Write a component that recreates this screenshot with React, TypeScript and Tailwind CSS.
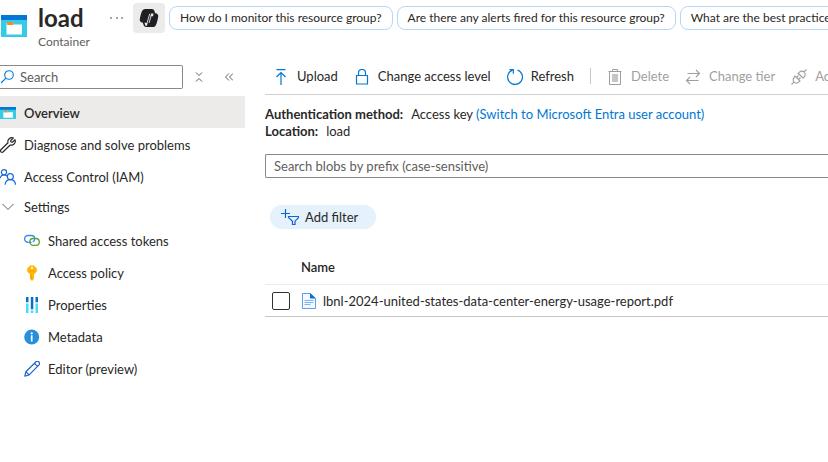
import type { ReactNode } from "react";

type IconProps = { className?: string };

function ContainerIcon({ className }: IconProps) {
  return (
    <svg className={className} viewBox="0 0 26 22" preserveAspectRatio="none" aria-hidden="true">
      <rect width="26" height="22" fill="#35cbe8" />
      <rect width="26" height="5" fill="#0078d4" />
      <path d="M5.500 8h7v1.500h8.500v10H5.500z" fill="#fff" />
      <rect x="6" y="7" width="6.500" height="3" rx=".8" fill="#f78d1e" />
    </svg>
  );
}

function CopilotIcon() {
  return (
    <svg className="size-5" viewBox="0 0 20 20" aria-hidden="true">
      <path d="M6.500 1h6.300c1.500 0 2.200.8 2.600 2l.8 2.300c2 0 3.400 1.400 3 3.600-.4 2.300-1 4.600-1.800 7-.6 2-1.700 3.100-3.600 3.100H7.300c-1.500 0-2.300-.8-2.700-2l-.8-2.300c-2 0-3.300-1.400-3-3.600.4-2.400 1-4.700 1.800-7C3.300 2 4.600 1 6.500 1z" fill="#1f2023" />
      <path d="M12 5.500h2.500l-.4 2.700h-2.600zM5.500 14.700h3.200l-.7 2.600c-.3.900-1.200.8-1.600.1z" fill="#ebebec" />
      <path d="M10.700 5.800 8.200 14.700M12.200 7.500 10 15" fill="none" stroke="#ebebec" strokeWidth=".9" />
    </svg>
  );
}

function SearchIcon() {
  return (
    <svg className="size-3.5 shrink-0" viewBox="0 0 14 14" fill="none" stroke="#0078d4" strokeWidth="1.100" aria-hidden="true">
      <circle cx="9" cy="5" r="4.300" />
      <path d="M5.900 8.100 1 13" />
    </svg>
  );
}

function WrenchIcon() {
  return (
    <svg className="size-4 shrink-0" viewBox="0 0 16 16" fill="none" stroke="#292827" strokeWidth="1.200" strokeLinejoin="round" aria-hidden="true">
      <path d="M13.300 1A4 4 0 0 0 8 5.800L.9 12.700a1.500 1.500 0 0 0 0 2.100 1.600 1.600 0 0 0 2.300 0L10.200 8A4 4 0 0 0 15 2.700l-2.600 2.500-1.500-.2-.2-1.500z" />
    </svg>
  );
}

function PeopleIcon() {
  return (
    <svg className="size-4 shrink-0" viewBox="0 0 16 16" fill="none" stroke="#1468d9" strokeWidth="1.200" aria-hidden="true">
      <circle cx="4" cy="3.200" r="2.600" />
      <circle cx="10.300" cy="7.700" r="3" />
      <path d="M.2 9.200C.6 7.200 2 5.900 4 5.900c1.200 0 2.200.5 3 1.300M5.100 15.800c.2-3.100 2.300-5.100 5.200-5.100s5 2 5.200 5.100" />
    </svg>
  );
}

function LinkIcon() {
  return (
    <svg className="size-4 shrink-0" viewBox="0 0 16 16" fill="none" strokeWidth="1.300" aria-hidden="true">
      <rect x="5.800" y="5.500" width="9.500" height="6.800" rx="3.400" stroke="#5ea42c" />
      <path d="M7.500 9.300H4a3.400 3.400 0 0 1 0-6.800h3.300a3.400 3.400 0 0 1 3.400 3.400c0 1.400-.8 2.500-1.900 3.100" stroke="#338fe5" />
    </svg>
  );
}

function KeyIcon() {
  return (
    <svg className="size-4 shrink-0" viewBox="0 0 16 16" aria-hidden="true">
      <path d="M6 .4h4l2.800 2.800v3.400L10 9.400V14l-2 2-2-2V9.400L3.200 6.600V3.200z" fill="#ffb900" />
      <circle cx="8" cy="3" r="1.200" fill="#fff0bd" />
      <path d="M5.300 6h5.400M7.300 9.500v4.500" stroke="#f5980a" strokeWidth=".9" />
    </svg>
  );
}

function BarsIcon() {
  return (
    <svg className="size-4 shrink-0" viewBox="0 0 16 16" aria-hidden="true">
      <path d="M2 7h2.500v9H2zM6.800 13h2.500v3H6.800zM11.500 7H14v9h-2.500z" fill="#50d8f5" />
      <path d="M2 0h2.500v5H2zM6.800 0h2.500v12H6.800zM11.500 0H14v5h-2.500z" fill="#0e6dbd" />
      <path d="M2 5h2.500v2H2zM6.800 12h2.500v2H6.800zM11.500 5H14v2h-2.500z" fill="#a5e6f7" />
    </svg>
  );
}

function InfoIcon() {
  return (
    <svg className="size-4 shrink-0" viewBox="0 0 16 16" aria-hidden="true">
      <circle cx="7.700" cy="8" r="7.500" fill="#288fdc" />
      <circle cx="7.700" cy="4.300" r="1.100" fill="#fff" />
      <path d="M7.700 6.300V12.500" stroke="#fff" strokeWidth="1.700" />
    </svg>
  );
}

function PencilIcon() {
  return (
    <svg className="size-4 shrink-0" viewBox="0 0 16 16" fill="none" stroke="#1f60ca" strokeWidth="1.200" strokeLinejoin="round" aria-hidden="true">
      <path d="m.8 15.200 1.100-4.500L11.800 1a1.900 1.900 0 0 1 3 0 2 2 0 0 1 0 3.100l-9.700 9.800zM10.500 2.300l3 3M1.900 10.700l3.200 3.200" />
    </svg>
  );
}

function UploadIcon() {
  return (
    <svg className="size-4" viewBox="0 0 16 16" fill="none" stroke="#0078d4" strokeWidth="1.200" aria-hidden="true">
      <path d="M3.500.6h9M8 16V3.500M3.500 8 8 3.500 12.500 8" />
    </svg>
  );
}

function LockIcon() {
  return (
    <svg className="size-4" viewBox="0 0 16 16" fill="none" stroke="#0078d4" strokeWidth="1.200" aria-hidden="true">
      <path d="M2.500 6.500h11v8.500h-11zM4.500 6.500V4a3.500 3.500 0 0 1 7 0v2.500" />
    </svg>
  );
}

function RefreshIcon() {
  return (
    <svg className="size-4" viewBox="0 0 16 16" fill="none" stroke="#0078d4" strokeWidth="1.200" aria-hidden="true">
      <path d="M10.500 1A7.400 7.400 0 1 1 5.300 1.100M2.500.7h3.800v4" />
    </svg>
  );
}

function TrashIcon() {
  return (
    <svg className="size-4" viewBox="0 0 16 16" fill="none" stroke="#a19f9d" aria-hidden="true">
      <path d="M5 5h6v8H5z" fill="#c8c6c4" stroke="none" />
      <path d="M1.500 2.500h13M5.500 2.500v-2h5v2M2.500 2.500v13h11v-13" />
    </svg>
  );
}

function SwapIcon() {
  return (
    <svg className="size-4" viewBox="0 0 16 16" fill="none" stroke="#a19f9d" strokeWidth="1.100" aria-hidden="true">
      <path d="M2.500 4.500h12M11 1l3.500 3.500L11 8M13.500 11.500h-12M5 8l-3.500 3.500L5 15" />
    </svg>
  );
}

function PlugIcon() {
  return (
    <svg className="size-4" viewBox="0 0 16 16" fill="none" stroke="#a19f9d" strokeWidth="1.100" aria-hidden="true">
      <path d="m.5 15.500 2.600-2.600M12.900 3.100 15.500.5M7 4l5 5 1.200-1.200a3.300 3.300 0 0 0 0-4.700 3.300 3.300 0 0 0-4.700 0L6.500 5.100M4 7l5 5-1.200 1.200a3.300 3.300 0 0 1-4.700 0 3.300 3.300 0 0 1 0-4.700zM5.500 8.500l2-2M7.500 10.500l2-2" />
    </svg>
  );
}

function FilterIcon() {
  return (
    <svg className="h-4 w-[18px]" viewBox="0 0 18 16" fill="none" stroke="#0f62d1" strokeWidth="1.200" aria-hidden="true">
      <path d="M4.500 0v9M0 4.500h9M7.500 7.500h10v1.200l-3.500 3.500v3.300h-2.500v-3.300L7.700 8.700z" />
    </svg>
  );
}

function FileIcon() {
  return (
    <svg className="h-4 w-3.5" viewBox="0 0 14 16" aria-hidden="true">
      <path d="M.5.5h8l5 5v10H.5z" fill="#f3f9ff" stroke="#5ea0ef" />
      <path d="M8 0v5.500h6z" fill="#0078d4" />
      <path d="M2.500 7.500h9M2.500 9.500h9M2.500 11.500h6" stroke="#7db4f3" />
    </svg>
  );
}

function NavItem({ icon, label, nested, active }: { icon: ReactNode; label: string; nested?: boolean; active?: boolean }) {
  return (
    <li>
      <a
        href="#"
        aria-current={active ? "page" : undefined}
        className={`flex h-8 items-center gap-2 pt-0.5 ${nested ? "pl-6" : ""} ${active ? "bg-[#edebe9] font-semibold" : ""}`}
      >
        {icon}
        <span>{label}</span>
      </a>
    </li>
  );
}

function Command({ icon, label, disabled }: { icon: ReactNode; label: string; disabled?: boolean }) {
  return (
    <button type="button" disabled={disabled} className="flex shrink-0 items-center gap-2 whitespace-nowrap disabled:text-[#a19f9d]">
      {icon}
      {label}
    </button>
  );
}

const prompts = [
  "How do I monitor this resource group?",
  "Are there any alerts fired for this resource group?",
  "What are the best practices for this resource group?",
];

export default function App() {
  return (
    <div className="min-h-screen overflow-hidden bg-white font-[Lato,'Open_Sans',sans-serif] text-[13px] leading-[17px] text-[#292827]">
      <header className="flex h-[65px] items-start">
        <ContainerIcon className="mt-[15px] ml-px h-[22px] w-[26px] shrink-0" />
        <div className="ml-[11px] w-[72px] shrink-0">
          <h1 className="mt-0.5 text-2xl leading-8 font-bold">load</h1>
          <p className="text-xs text-[#605e5c]">Container</p>
        </div>
        <button type="button" aria-label="More actions" className="mt-[17px] flex w-[13px] shrink-0 justify-between">
          <i className="size-0.5 rounded-full bg-[#8a8886]" />
          <i className="size-0.5 rounded-full bg-[#8a8886]" />
          <i className="size-0.5 rounded-full bg-[#8a8886]" />
        </button>
        <button type="button" aria-label="Copilot" className="mt-[3px] ml-2.5 flex h-[30px] w-8 shrink-0 items-center justify-center rounded bg-[#ebebec]">
          <CopilotIcon />
        </button>
        <div className="mt-1.5 ml-1 flex min-w-0 flex-1 gap-1 overflow-hidden">
          {prompts.map((prompt) => (
            <button key={prompt} type="button" className="h-6 shrink-0 rounded-lg border border-[#b4d6fa] px-2.5 text-xs whitespace-nowrap">
              {prompt}
            </button>
          ))}
        </div>
      </header>

      <div className="flex">
        <aside className="w-[245px] shrink-0">
          <div className="flex items-center">
            <label className="flex h-6 w-[183px] items-center gap-1.5 rounded-r-xs border border-l-0 border-[#8a8886]">
              <SearchIcon />
              <input type="search" aria-label="Search menu" placeholder="Search" className="w-full min-w-0 outline-none placeholder:text-[#605e5c]" />
            </label>
            <button type="button" aria-label="Collapse all" className="ml-3">
              <svg className="h-3 w-2" viewBox="0 0 8 12" fill="none" stroke="#605e5c" aria-hidden="true">
                <path d="m1 1.500 3 3 3-3M1 10.500l3-3 3 3" />
              </svg>
            </button>
            <button type="button" aria-label="Hide menu" className="ml-[22px]">
              <svg className="size-2" viewBox="0 0 8 8" fill="none" stroke="#605e5c" aria-hidden="true">
                <path d="M4 .5.500 4 4 7.500M8 .5 4.500 4 8 7.500" />
              </svg>
            </button>
          </div>
          <nav aria-label="Resource menu" className="mt-[7px]">
            <ul>
              <NavItem active label="Overview" icon={<ContainerIcon className="h-3 w-4" />} />
              <NavItem label="Diagnose and solve problems" icon={<WrenchIcon />} />
              <NavItem label="Access Control (IAM)" icon={<PeopleIcon />} />
            </ul>
            <button type="button" aria-expanded="true" className="flex h-8 items-center gap-2 pb-0.5">
              <svg className="size-4" viewBox="0 0 16 16" fill="none" stroke="#605e5c" aria-hidden="true">
                <path d="m2.500 5 5.500 5.500L13.500 5" />
              </svg>
              Settings
            </button>
            <ul>
              <NavItem nested label="Shared access tokens" icon={<LinkIcon />} />
              <NavItem nested label="Access policy" icon={<KeyIcon />} />
              <NavItem nested label="Properties" icon={<BarsIcon />} />
              <NavItem nested label="Metadata" icon={<InfoIcon />} />
              <NavItem nested label="Editor (preview)" icon={<PencilIcon />} />
            </ul>
          </nav>
        </aside>

        <main className="ml-5 min-w-0 flex-1">
          <div role="toolbar" aria-label="Container commands" className="flex h-[30px] items-start gap-4 overflow-hidden border-b border-[#d2d0ce] pt-[3px] pl-2">
            <Command icon={<UploadIcon />} label="Upload" />
            <Command icon={<LockIcon />} label="Change access level" />
            <Command icon={<RefreshIcon />} label="Refresh" />
            <div className="h-4 w-px shrink-0 bg-[#c8c6c4]" />
            <Command disabled icon={<TrashIcon />} label="Delete" />
            <Command disabled icon={<SwapIcon />} label="Change tier" />
            <Command disabled icon={<PlugIcon />} label="Acquire lease" />
          </div>

          <dl className="mt-[11px]">
            <div className="flex gap-2">
              <dt className="font-bold">Authentication method:</dt>
              <dd>Access key <a href="#" className="text-[#0078d4]">(Switch to Microsoft Entra user account)</a></dd>
            </div>
            <div className="flex gap-2">
              <dt className="font-bold">Location:</dt>
              <dd>load</dd>
            </div>
          </dl>

          <input
            type="search"
            aria-label="Search blobs"
            placeholder="Search blobs by prefix (case-sensitive)"
            className="mt-3.5 block h-6 w-full rounded-l-xs border border-r-0 border-[#8a8886] px-2 outline-none placeholder:text-[#605e5c]"
          />

          <button type="button" className="mt-[27px] ml-[5px] flex h-6 items-center gap-1.5 rounded-full bg-[#e5f1fb] pr-[18px] pl-[11px]">
            <FilterIcon />
            Add filter
          </button>

          <table className="mt-[23px] w-full border-collapse text-left">
            <thead>
              <tr className="h-8 border-b border-[#edebe9]">
                <th className="w-9" aria-label="Select" />
                <th className="font-semibold">Name</th>
              </tr>
            </thead>
            <tbody>
              <tr className="h-8 border-b border-[#c8c6c4]">
                <td className="pt-0.5 pl-[7px]">
                  <input type="checkbox" aria-label="Select blob" className="block size-[18px] appearance-none rounded-xs border border-[#323130] checked:bg-[#0078d4]" />
                </td>
                <td className="pt-0.5">
                  <a href="#" className="flex items-center gap-[7px] pl-px">
                    <FileIcon />
                    lbnl-2024-united-states-data-center-energy-usage-report.pdf
                  </a>
                </td>
              </tr>
            </tbody>
          </table>
        </main>
      </div>
    </div>
  );
}
